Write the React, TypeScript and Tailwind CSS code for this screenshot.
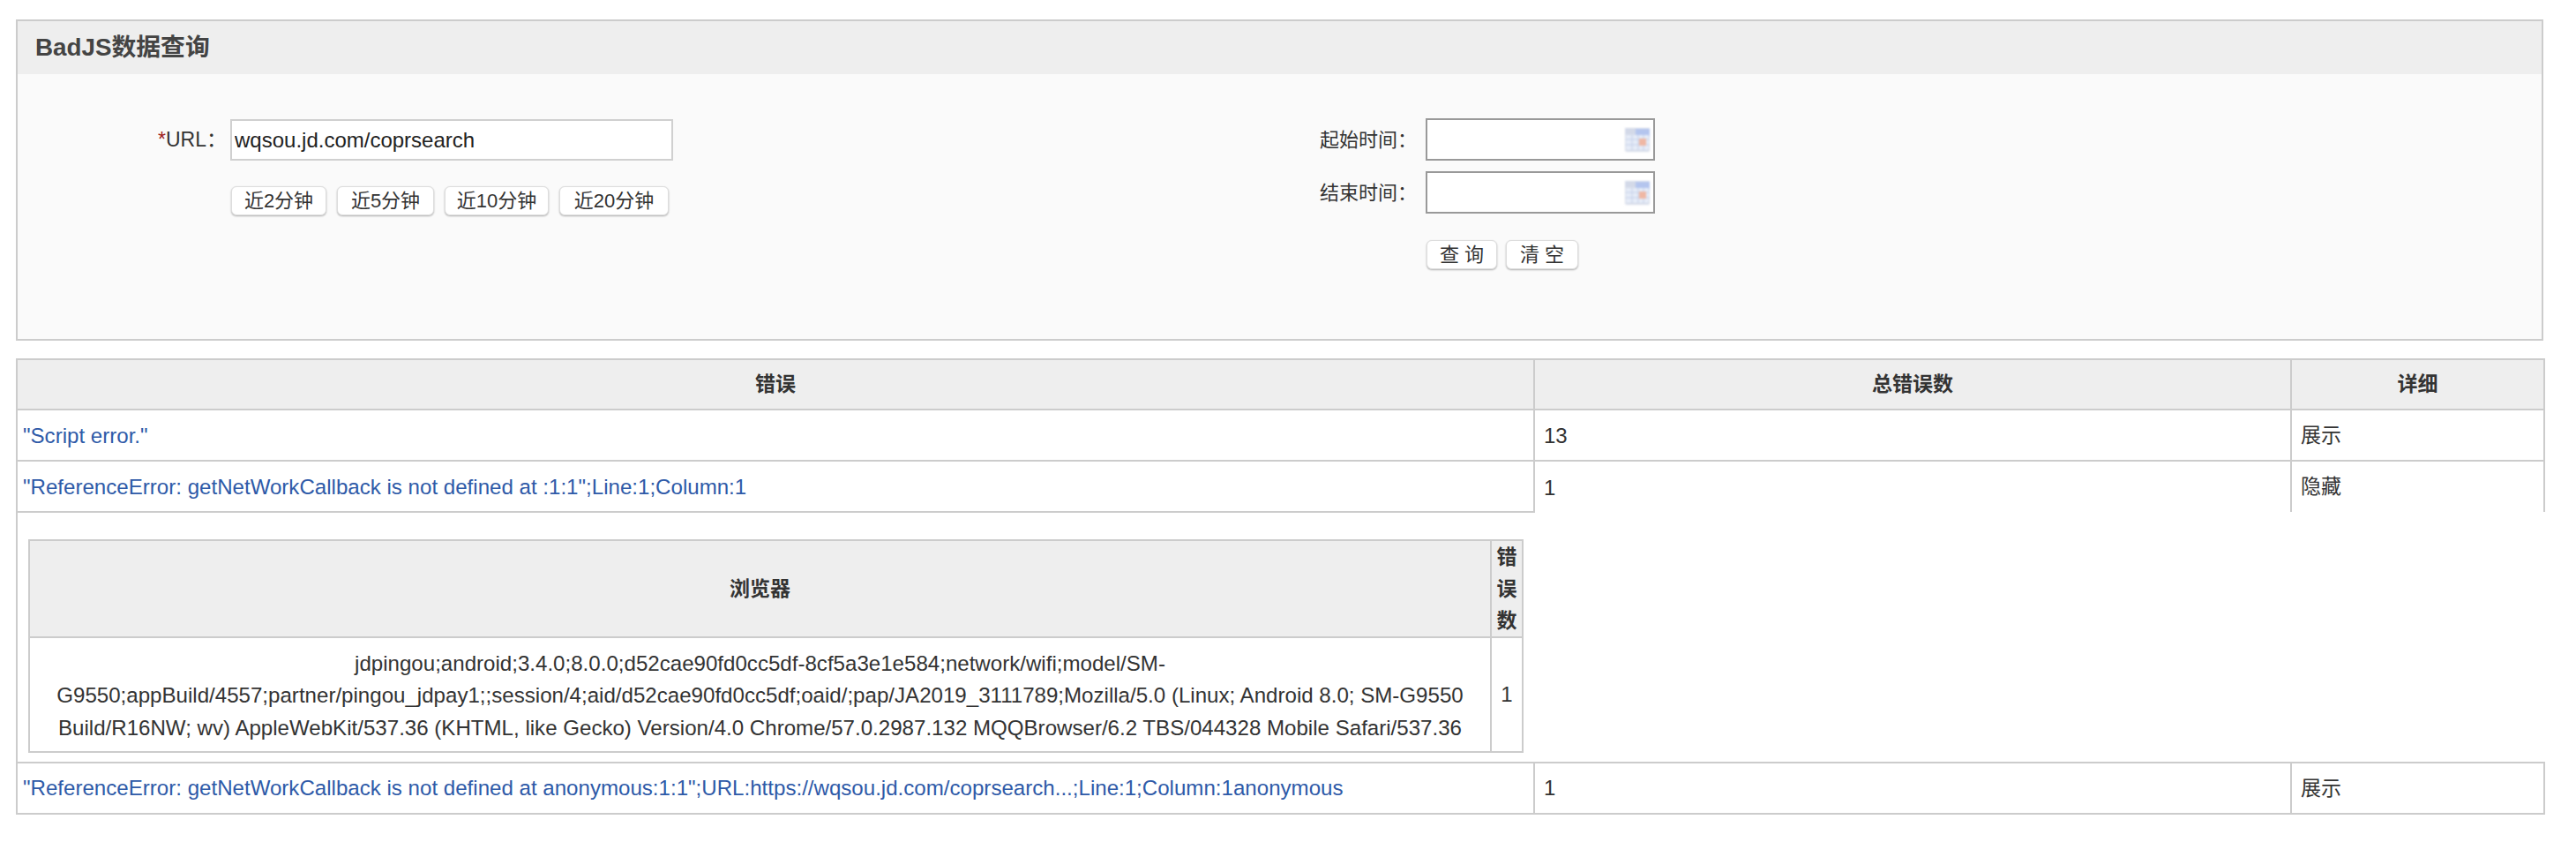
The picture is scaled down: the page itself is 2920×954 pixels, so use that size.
const cellBorder = "border-2 border-[#ccc]";

function CalendarIcon() {
  return (
    <svg width="28" height="27" viewBox="0 0 28 27" className="blur-[1px]">
      <rect x="0" y="0" width="28" height="27" rx="2" fill="#d5dbe8" />
      <rect x="0" y="0" width="28" height="7" fill="#d3d9e8" />
      <rect x="12" y="1" width="16" height="9" fill="#b4c5ee" />
      <rect x="1" y="8" width="26" height="17" fill="#e6ecf8" />
      <path d="M1 13H27M1 19H27M8 8V25M15 8V25M21 8V25" stroke="#c3cfe8" strokeWidth="1" />
      <rect x="16" y="12" width="8" height="8" fill="#efb7a3" />
    </svg>
  );
}

function DateInput() {
  return (
    <div className="w-[260px] h-[48px] bg-white border-2 border-[#999] flex items-center justify-end pr-[4px]">
      <CalendarIcon />
    </div>
  );
}

function Btn({ children, className }: { children: React.ReactNode; className: string }) {
  return (
    <button
      type="button"
      className={`h-[33px] bg-white border border-[#ddd] rounded-[6px] shadow-[0_1px_2px_rgba(0,0,0,0.3)] text-[22px] leading-none text-[#333] ${className}`}
    >
      {children}
    </button>
  );
}

const browserText =
  "jdpingou;android;3.4.0;8.0.0;d52cae90fd0cc5df-8cf5a3e1e584;network/wifi;model/SM-G9550;appBuild/4557;partner/pingou_jdpay1;;session/4;aid/d52cae90fd0cc5df;oaid/;pap/JA2019_3111789;Mozilla/5.0 (Linux; Android 8.0; SM-G9550 Build/R16NW; wv) AppleWebKit/537.36 (KHTML, like Gecko) Version/4.0 Chrome/57.0.2987.132 MQQBrowser/6.2 TBS/044328 Mobile Safari/537.36";

export default function App() {
  return (
    <div className="min-h-screen bg-white pl-[18px] pt-[22px] text-[#333] text-[23px] font-['Liberation_Sans','Noto_Sans_CJK_SC',sans-serif]">
      {/* query panel */}
      <div className="w-[2865px] border-2 border-[#ccc] mb-[20px]">
        <div className="h-[60px] bg-[#eee] flex items-center pl-[20px] text-[27.8px] font-bold text-[#444]">
          BadJS数据查询
        </div>
        <div className="h-[300px] bg-[#fafafa] flex pt-[50px]">
          <div className="w-[1456px] pt-[1px]">
            <div className="flex items-center">
              <label className="w-[241px] text-right pr-[4px] text-[23px]">
                <span className="text-[#a02020]">*</span>URL：
              </label>
              <input
                defaultValue="wqsou.jd.com/coprsearch"
                className="w-[502px] h-[47px] bg-white border-2 border-[#d0d0d0] px-[3px] text-[24px] text-[#222] outline-none"
              />
            </div>
            <div className="flex gap-[12px] pl-[242px] mt-[29px]">
              <Btn className="w-[108px]">近2分钟</Btn>
              <Btn className="w-[110px]">近5分钟</Btn>
              <Btn className="w-[118px]">近10分钟</Btn>
              <Btn className="w-[124px]">近20分钟</Btn>
            </div>
          </div>
          <div>
            <div className="flex items-center">
              <label className="w-[140px] text-right pr-[10px] text-[22px]">起始时间：</label>
              <DateInput />
            </div>
            <div className="flex items-center mt-[12px]">
              <label className="w-[140px] text-right pr-[10px] text-[22px]">结束时间：</label>
              <DateInput />
            </div>
            <div className="flex gap-[10px] pl-[141px] mt-[30px]">
              <Btn className="w-[80px]">查 询</Btn>
              <Btn className="w-[82px]">清 空</Btn>
            </div>
          </div>
        </div>
      </div>

      {/* result table */}
      <table className="w-[2865px] table-fixed border-collapse">
        <colgroup>
          <col className="w-[1720px]" />
          <col className="w-[858px]" />
          <col className="w-[287px]" />
        </colgroup>
        <thead>
          <tr className="h-[57px] bg-[#eee]">
            <th className={`${cellBorder} font-bold`}>错误</th>
            <th className={`${cellBorder} font-bold`}>总错误数</th>
            <th className={`${cellBorder} font-bold`}>详细</th>
          </tr>
        </thead>
        <tbody>
          <tr className="h-[58px]">
            <td className={`${cellBorder} pl-[6px] pt-[2px] text-[24.1px] text-[#2e5aa8]`}>"Script error."</td>
            <td className={`${cellBorder} pl-[10px] pt-[2px] text-[24px]`}>13</td>
            <td className={`${cellBorder} pl-[10px]`}>展示</td>
          </tr>
          <tr className="h-[58px]">
            <td className={`${cellBorder} pl-[6px] pt-[2px] text-[24.1px] text-[#2e5aa8]`}>
              "ReferenceError: getNetWorkCallback is not defined at :1:1";Line:1;Column:1
            </td>
            <td className="border-2 border-b-0 border-[#ccc] pl-[10px] pt-[2px] text-[24px]">1</td>
            <td className="border-2 border-b-0 border-[#ccc] pl-[10px]">隐藏</td>
          </tr>
          <tr className="h-[284px]">
            <td className="border-2 border-r-0 border-[#ccc] align-top pl-[12px] pt-[30px]">
              <table className="w-[1695px] table-fixed border-collapse">
                <colgroup>
                  <col />
                  <col className="w-[36px]" />
                </colgroup>
                <thead>
                  <tr className="h-[110px] bg-[#eee]">
                    <th className={`${cellBorder} font-bold`}>浏览器</th>
                    <th className={`${cellBorder} font-bold leading-[36px]`}>错误数</th>
                  </tr>
                </thead>
                <tbody>
                  <tr className="h-[130px]">
                    <td className={`${cellBorder} text-center text-[24.1px] leading-[36.5px] px-[10px] pt-[3px] break-words`}>
                      {browserText}
                    </td>
                    <td className={`${cellBorder} text-center text-[24px]`}>1</td>
                  </tr>
                </tbody>
              </table>
            </td>
            <td colSpan={2} className="border-b-2 border-[#ccc]"></td>
          </tr>
          <tr className="h-[58px]">
            <td className={`${cellBorder} pl-[6px] text-[24.1px] text-[#2e5aa8]`}>
              "ReferenceError: getNetWorkCallback is not defined at anonymous:1:1";URL:https://wqsou.jd.com/coprsearch...;Line:1;Column:1anonymous
            </td>
            <td className={`${cellBorder} pl-[10px] text-[24px]`}>1</td>
            <td className={`${cellBorder} pl-[10px]`}>展示</td>
          </tr>
        </tbody>
      </table>
    </div>
  );
}
